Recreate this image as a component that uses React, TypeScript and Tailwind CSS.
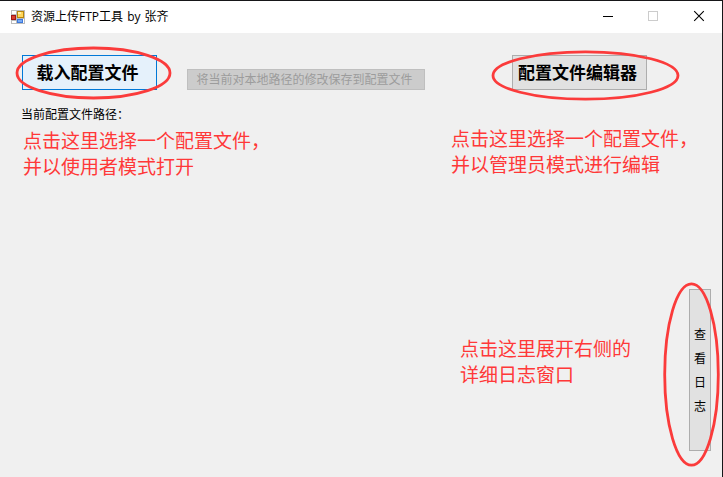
import React from "react";

function FormIcon() {
  return (
    <svg className="block h-[14px] w-[14px]" viewBox="0 0 14 14" shapeRendering="crispEdges">
      <rect width="14" height="14" fill="#bcbcbc" />
      <rect x="1" y="1" width="4" height="3" fill="#fff" />
      <rect x="1" y="11" width="4" height="2" fill="#fff" />
      <rect x="6" y="1" width="7" height="7" fill="#b8860b" />
      <rect x="7" y="2" width="5" height="5" fill="#ffd65a" />
      <rect x="7" y="2" width="3" height="2" fill="#fff0a8" />
      <rect x="0" y="5" width="5" height="5" fill="#a01818" />
      <rect x="1" y="6" width="3" height="3" fill="#d8402c" />
      <rect x="6" y="9" width="6" height="4" fill="#3c78dc" />
      <rect x="7" y="10" width="4" height="2" fill="#78aaf5" />
      <rect x="12" y="9" width="1" height="4" fill="#fff" />
    </svg>
  );
}

function TitleBar() {
  return (
    <header className="flex h-8 items-center bg-white pl-[11px] text-black">
      <FormIcon />
      <h1 className="ml-[6px] flex-1 whitespace-nowrap font-['Open_Sans','Noto_Sans_CJK_SC',sans-serif] text-[12px] leading-4 [word-spacing:1px]">
        资源上传FTP工具 by 张齐
      </h1>
      <svg className="h-8 w-[140px]" viewBox="0 0 140 32" fill="none">
        <path d="M21 15.5H31" stroke="#000" />
        <rect x="66.5" y="10.5" width="9" height="9" stroke="#ccc" />
        <path d="M112.2 10.2L121.8 19.8M121.8 10.2L112.2 19.8" stroke="#000" strokeWidth="1.1" />
      </svg>
    </header>
  );
}

function Note({ lines, className }: { lines: string[]; className: string }) {
  return (
    <p className={`whitespace-nowrap text-[19px] leading-[26px] text-[#ff3838] ${className}`}>
      {lines.map((line) => (
        <span key={line} className="block">
          {line}
        </span>
      ))}
    </p>
  );
}

function Markers() {
  return (
    <svg
      className="pointer-events-none absolute left-0 top-0 h-[477px] w-[723px]"
      viewBox="0 0 723 477"
      fill="none"
      stroke="#fb3b3b"
      strokeWidth="2.8"
    >
      <ellipse cx="93.5" cy="73" rx="76.5" ry="25" />
      <ellipse cx="585.5" cy="75.5" rx="92.5" ry="23.7" />
      <ellipse cx="691.5" cy="374.5" rx="26.8" ry="90.7" />
    </svg>
  );
}

export default function App() {
  return (
    <div className="relative flex h-[477px] w-[723px] flex-col overflow-hidden border-r border-t border-[#161618] bg-[#f0f0f0] font-['Noto_Sans_CJK_SC',sans-serif] text-black">
      <TitleBar />
      <main className="flex flex-1 flex-col">
        <div className="flex pl-[22px] pt-[22px]">
          <button className="h-[35px] w-[135px] whitespace-nowrap border border-[#0078d7] bg-[#e5f1fb] pb-[2px] pr-[4px] text-[17px] font-bold leading-[31px]">
            载入配置文件
          </button>
          <button
            disabled
            className="ml-[30px] mt-[14px] h-[21px] w-[238px] whitespace-nowrap border border-[#bfbfbf] bg-[#ccc] pb-[2px] pr-[3px] text-[12px] leading-[17px] text-[#9c9c9c]"
          >
            将当前对本地路径的修改保存到配置文件
          </button>
          <button className="ml-[87px] h-[35px] w-[135px] whitespace-nowrap border border-[#adadad] bg-[#e1e1e1] pb-[2px] pr-[4px] text-[17px] font-bold leading-[31px]">
            配置文件编辑器
          </button>
        </div>
        <div className="flex">
          <div className="w-[451px] pt-[16px]">
            <p className="pl-[21px] text-[12px] leading-4">当前配置文件路径：</p>
            <Note className="mt-[5px] pl-[23px]" lines={["点击这里选择一个配置文件，", "并以使用者模式打开"]} />
          </div>
          <Note className="pt-[35px]" lines={["点击这里选择一个配置文件，", "并以管理员模式进行编辑"]} />
        </div>
        <div className="mt-auto flex h-[188px] items-start">
          <Note className="w-[689px] pl-[460px] pt-[46px]" lines={["点击这里展开右侧的", "详细日志窗口"]} />
          <button className="flex h-[162px] w-[22px] flex-col items-center justify-center border border-[#adadad] bg-[#e1e1e1] text-[12px] leading-6">
            <span>查</span>
            <span>看</span>
            <span>日</span>
            <span>志</span>
          </button>
        </div>
      </main>
      <div className="absolute left-0 top-[-1px]">
        <Markers />
      </div>
    </div>
  );
}
